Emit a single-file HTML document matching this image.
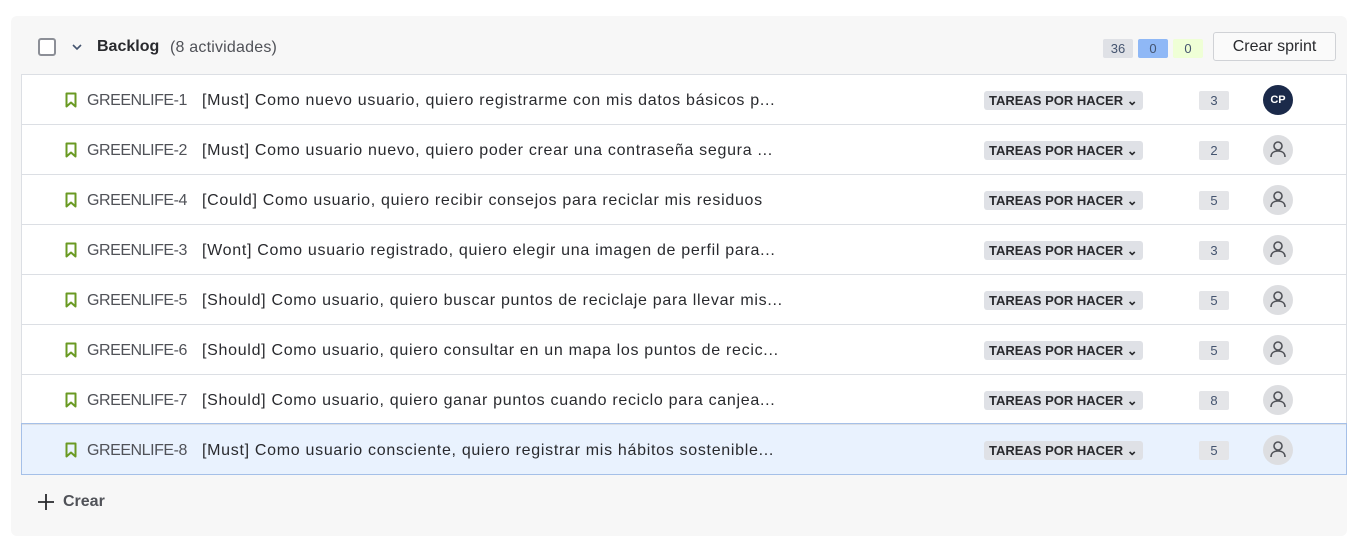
<!DOCTYPE html>
<html><head><meta charset="utf-8"><style>
*{box-sizing:border-box;margin:0;padding:0}
body{width:1347px;height:548px;background:#fff;font-family:"Liberation Sans",sans-serif;color:#172b4d;position:relative;overflow:hidden}
.wrap{position:absolute;left:11px;top:16px;width:1336px;height:520px;border-radius:6px;background:#f7f7f7}
.abs{position:absolute}
.cb{left:27px;top:22px;width:18px;height:18px;border:2px solid #8c8f97;border-radius:3px;background:#fff}
.title{left:86px;top:22px;font-size:16px;font-weight:bold;color:#292a2e}
.sub{left:159px;top:23px;font-size:16px;color:#505258;letter-spacing:0.2px}
.cnt{top:23px;height:19px;width:30px;font-size:13px;text-align:center;line-height:19px;color:#44546f;border-radius:2px}
.btn{left:1202px;top:16px;width:123px;height:29px;border:1px solid #d0d2d6;border-radius:3px;background:#fafafa;font-size:16px;line-height:27px;text-align:center;color:#292a2e}
.list{position:absolute;left:21px;top:74px;width:1326px;border:1px solid #dcdfe4;background:#fff}
.row{height:50px;border-top:1px solid #dcdfe4;position:relative;font-size:16px;color:#292a2e}
.row:first-child{border-top:none;height:49px}
.row.sel{background:#e9f2fe;outline:1px solid #a5c0e8}
.row svg.bm{position:absolute;left:43px;top:17px}
.key{position:absolute;left:65px;top:17px;color:#505258;letter-spacing:-0.45px}
.sum{position:absolute;left:180px;top:17px;white-space:nowrap;letter-spacing:0.7px}
.st{position:absolute;left:962px;top:16px;height:19px;width:159px;background:#dfe1e6;border-radius:3px;font-size:13px;font-weight:bold;line-height:19px;padding-left:5px;color:#292a2e}
.est{position:absolute;left:1177px;top:16px;width:30px;height:19px;background:#e4e5e8;border-radius:2px;font-size:13px;text-align:center;line-height:19px;color:#44546f}
.av{position:absolute;left:1241px;top:10px;width:30px;height:30px;border-radius:50%;background:#dddee1}
.cp{background:#1b2a4a;color:#fff;font-size:11px;font-weight:bold;text-align:center;line-height:30px}
</style></head><body>
<div class="wrap">
<div class="abs cb"></div>
<svg class="abs" style="left:60px;top:26px" width="12" height="10" viewBox="0 0 12 10"><path d="M2 3l4 4 4-4" fill="none" stroke="#44546f" stroke-width="1.6"/></svg>
<div class="abs title">Backlog</div>
<div class="abs sub">(8 actividades)</div>
<div class="abs cnt" style="left:1092px;background:#dfe1e6">36</div>
<div class="abs cnt" style="left:1127px;background:#8fb8f6">0</div>
<div class="abs cnt" style="left:1162px;background:#efffd6">0</div>
<div class="abs btn">Crear sprint</div>
<svg class="abs" style="left:26px;top:477px" width="18" height="18" viewBox="0 0 18 18"><path d="M9 1v16M1 9h16" stroke="#292a2e" stroke-width="1.8"/></svg>
<div class="abs" style="left:52px;top:477px;font-size:16px;font-weight:bold;color:#505258">Crear</div>
</div>
<div class="list">
<div class="row"><svg class="bm" width="12" height="16" viewBox="0 0 12 16"><path d="M1.5 1.5h9v13L6 10.5 1.5 14.5z" fill="none" stroke="#6a9a23" stroke-width="2" stroke-linejoin="round"/></svg><span class="key">GREENLIFE-1</span><span class="sum">[Must] Como nuevo usuario, quiero registrarme con mis datos básicos p...</span><div class="st">TAREAS POR HACER ⌄</div><div class="est">3</div><div class="av cp">CP</div></div>
<div class="row"><svg class="bm" width="12" height="16" viewBox="0 0 12 16"><path d="M1.5 1.5h9v13L6 10.5 1.5 14.5z" fill="none" stroke="#6a9a23" stroke-width="2" stroke-linejoin="round"/></svg><span class="key">GREENLIFE-2</span><span class="sum">[Must] Como usuario nuevo, quiero poder crear una contraseña segura ...</span><div class="st">TAREAS POR HACER ⌄</div><div class="est">2</div><div class="av"><svg width="30" height="30" viewBox="0 0 30 30"><circle cx="15" cy="11" r="4" fill="none" stroke="#505258" stroke-width="1.6"/><path d="M8 22c0-4 3-6 7-6s7 2 7 6" fill="none" stroke="#505258" stroke-width="1.6"/></svg></div></div>
<div class="row"><svg class="bm" width="12" height="16" viewBox="0 0 12 16"><path d="M1.5 1.5h9v13L6 10.5 1.5 14.5z" fill="none" stroke="#6a9a23" stroke-width="2" stroke-linejoin="round"/></svg><span class="key">GREENLIFE-4</span><span class="sum">[Could] Como usuario, quiero recibir consejos para reciclar mis residuos</span><div class="st">TAREAS POR HACER ⌄</div><div class="est">5</div><div class="av"><svg width="30" height="30" viewBox="0 0 30 30"><circle cx="15" cy="11" r="4" fill="none" stroke="#505258" stroke-width="1.6"/><path d="M8 22c0-4 3-6 7-6s7 2 7 6" fill="none" stroke="#505258" stroke-width="1.6"/></svg></div></div>
<div class="row"><svg class="bm" width="12" height="16" viewBox="0 0 12 16"><path d="M1.5 1.5h9v13L6 10.5 1.5 14.5z" fill="none" stroke="#6a9a23" stroke-width="2" stroke-linejoin="round"/></svg><span class="key">GREENLIFE-3</span><span class="sum">[Wont] Como usuario registrado, quiero elegir una imagen de perfil para...</span><div class="st">TAREAS POR HACER ⌄</div><div class="est">3</div><div class="av"><svg width="30" height="30" viewBox="0 0 30 30"><circle cx="15" cy="11" r="4" fill="none" stroke="#505258" stroke-width="1.6"/><path d="M8 22c0-4 3-6 7-6s7 2 7 6" fill="none" stroke="#505258" stroke-width="1.6"/></svg></div></div>
<div class="row"><svg class="bm" width="12" height="16" viewBox="0 0 12 16"><path d="M1.5 1.5h9v13L6 10.5 1.5 14.5z" fill="none" stroke="#6a9a23" stroke-width="2" stroke-linejoin="round"/></svg><span class="key">GREENLIFE-5</span><span class="sum">[Should] Como usuario, quiero buscar puntos de reciclaje para llevar mis...</span><div class="st">TAREAS POR HACER ⌄</div><div class="est">5</div><div class="av"><svg width="30" height="30" viewBox="0 0 30 30"><circle cx="15" cy="11" r="4" fill="none" stroke="#505258" stroke-width="1.6"/><path d="M8 22c0-4 3-6 7-6s7 2 7 6" fill="none" stroke="#505258" stroke-width="1.6"/></svg></div></div>
<div class="row"><svg class="bm" width="12" height="16" viewBox="0 0 12 16"><path d="M1.5 1.5h9v13L6 10.5 1.5 14.5z" fill="none" stroke="#6a9a23" stroke-width="2" stroke-linejoin="round"/></svg><span class="key">GREENLIFE-6</span><span class="sum">[Should] Como usuario, quiero consultar en un mapa los puntos de recic...</span><div class="st">TAREAS POR HACER ⌄</div><div class="est">5</div><div class="av"><svg width="30" height="30" viewBox="0 0 30 30"><circle cx="15" cy="11" r="4" fill="none" stroke="#505258" stroke-width="1.6"/><path d="M8 22c0-4 3-6 7-6s7 2 7 6" fill="none" stroke="#505258" stroke-width="1.6"/></svg></div></div>
<div class="row"><svg class="bm" width="12" height="16" viewBox="0 0 12 16"><path d="M1.5 1.5h9v13L6 10.5 1.5 14.5z" fill="none" stroke="#6a9a23" stroke-width="2" stroke-linejoin="round"/></svg><span class="key">GREENLIFE-7</span><span class="sum">[Should] Como usuario, quiero ganar puntos cuando reciclo para canjea...</span><div class="st">TAREAS POR HACER ⌄</div><div class="est">8</div><div class="av"><svg width="30" height="30" viewBox="0 0 30 30"><circle cx="15" cy="11" r="4" fill="none" stroke="#505258" stroke-width="1.6"/><path d="M8 22c0-4 3-6 7-6s7 2 7 6" fill="none" stroke="#505258" stroke-width="1.6"/></svg></div></div>
<div class="row sel"><svg class="bm" width="12" height="16" viewBox="0 0 12 16"><path d="M1.5 1.5h9v13L6 10.5 1.5 14.5z" fill="none" stroke="#6a9a23" stroke-width="2" stroke-linejoin="round"/></svg><span class="key">GREENLIFE-8</span><span class="sum">[Must] Como usuario consciente, quiero registrar mis hábitos sostenible...</span><div class="st">TAREAS POR HACER ⌄</div><div class="est">5</div><div class="av"><svg width="30" height="30" viewBox="0 0 30 30"><circle cx="15" cy="11" r="4" fill="none" stroke="#505258" stroke-width="1.6"/><path d="M8 22c0-4 3-6 7-6s7 2 7 6" fill="none" stroke="#505258" stroke-width="1.6"/></svg></div></div>
</div>
</body></html>
